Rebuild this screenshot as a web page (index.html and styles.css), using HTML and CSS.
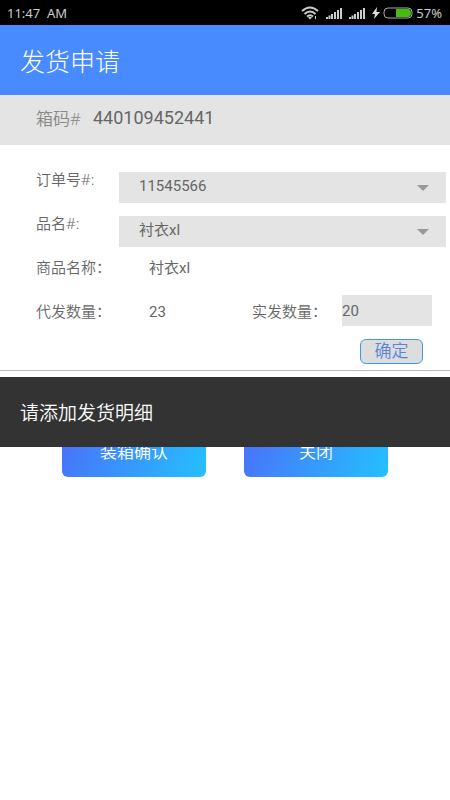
FILE: index.html
```html
<!DOCTYPE html>
<html lang="zh-CN">
<head>
	<meta charset="utf-8">
	<meta name="viewport" content="width=device-width, initial-scale=1">
	<title>发货申请</title>

	<link rel="stylesheet" href="styles.css">
</head>
<body>

	<div class="status-bar">
		<span class="status-time">11:47&nbsp; AM</span>
		<div class="status-icons">
			<svg class="wifi" width="18" height="14" viewBox="0 0 18 14" fill="none" stroke="#ccc" stroke-width="2">
				<path d="M1 5Q9 -2 17 5M3.500 8Q9 3 14.500 8M6 10.500Q9 8 12 10.500"/>
				<path d="M7 11.500Q9 10 11 11.500L9 13.500Z" fill="#ccc" stroke="none"/>
				<path d="M14.500 10V13" stroke-width="1"/>
			</svg>
			<svg class="signal" width="16" height="12" viewBox="0 0 16 12" fill="#ccc">
				<path d="M0 10h2v2H0zM2.500 8.500h2v3.500h-2zM5 7h2v5H5zM8 5h2v7H8zM11 3h2v9h-2zM14 1h2v11h-2z"/>
			</svg>
			<svg class="signal" width="16" height="12" viewBox="0 0 16 12" fill="#ccc">
				<path d="M0 10h2v2H0zM2.500 8.500h2v3.500h-2zM5 7h2v5H5zM8 5h2v7H8zM11 3h2v9h-2zM14 1h2v11h-2z"/>
			</svg>
			<svg class="bolt" width="8" height="12" viewBox="0 0 8 12" fill="#ddd">
				<path d="M5 0L0 7H3L2 12L8 5H4.500Z"/>
			</svg>
			<svg class="battery" width="30" height="12" viewBox="0 0 30 12">
				<rect x="1" y="1" width="28" height="10" rx="4" fill="none" stroke="#aaa"/>
				<path d="M13 2H25Q28 2 28 6T25 10H13Z" fill="#4b1"/>
			</svg>
			<span>57%</span>
		</div>
	</div>

	<header class="title-bar">
		<h1>发货申请</h1>
	</header>

	<div class="box-code">
		<span class="box-code-label">箱码#</span>
		<span class="box-code-value">440109452441</span>
	</div>

	<main>
		<form class="detail-form">
			<div class="row">
				<label for="order">订单号#:</label>
				<div class="select-box">
					<select id="order">
						<option>11545566</option>
					</select>
				</div>
			</div>

			<div class="row">
				<label for="product">品名#:</label>
				<div class="select-box">
					<select id="product">
						<option>衬衣xl</option>
					</select>
				</div>
			</div>

			<div class="row">
				<span class="row-label">商品名称：</span>
				<span class="row-value">衬衣xl</span>
			</div>

			<div class="row">
				<span class="row-label">代发数量：</span>
				<span class="row-value">23</span>
				<label class="quantity-label" for="quantity">实发数量：</label>
				<input class="quantity" type="text" id="quantity" value="20">
			</div>

			<div class="confirm">
				<button type="button" class="confirm-button">确定</button>
			</div>
		</form>

		<div class="footer">
			<div class="actions">
				<button type="button" class="action-button">装箱确认</button>
				<button type="button" class="action-button">关闭</button>
			</div>

			<!-- Message shown over the buttons -->
			<div class="toast" role="alert">请添加发货明细</div>
		</div>
	</main>

</body>
</html>
```

FILE: styles.css
```css
* {
	box-sizing: border-box;
}

body {
	margin: 0;
	background: #fff;
	color: #666;
	font-family: Roboto, "Noto Sans CJK SC", sans-serif;
	font-size: 15px;
}

input,
select,
button {
	margin: 0;
	border: 0;
	border-radius: 0;
	font: inherit;
	color: inherit;
}

.status-bar {
	display: flex;
	justify-content: space-between;
	align-items: center;
	height: 25px;
	padding: 0 8px 0 7px;
	background: #000;
	color: #ccc;
	font-family: "Noto Sans", sans-serif;
	font-size: 13px;
}

.status-icons {
	display: flex;
	align-items: center;
	gap: 7px;
}

.bolt {
	margin-right: -4px;
}

.battery {
	margin-right: -4px;
}

.title-bar {
	display: flex;
	align-items: center;
	height: 70px;
	padding: 0 20px;
	background: #488aff;
	color: #fff;
}

.title-bar h1 {
	margin: 0;
	font-size: 25px;
	font-weight: 300;
}

.box-code {
	display: flex;
	gap: 12px;
	height: 50px;
	padding: 0 36px;
	background: #e4e4e4;
	line-height: 48px;
}

.box-code-label {
	color: #888;
	font-family: "Noto Sans", "Noto Sans CJK SC", sans-serif;
	font-size: 17px;
	font-weight: 350;
}

.box-code-value {
	font-size: 18px;
	line-height: 46px;
}

.detail-form {
	padding: 14px 0 6px 36px;
	border-bottom: 1px solid #bbb;
}

.row {
	display: flex;
	height: 44px;
	line-height: 42px;
}

.row label,
.row-label {
	flex: none;
	width: 83px;
	font-family: "Noto Sans", "Noto Sans CJK SC", sans-serif;
	font-weight: 350;
	line-height: 40px;
}

.select-box {
	position: relative;
	flex: 1;
	align-self: flex-end;
	height: 31px;
	margin-right: 4px;
	background: #e4e4e4;
}

.select-box::after {
	content: "";
	position: absolute;
	top: 13px;
	right: 17px;
	border: 6px solid transparent;
	border-top-color: #999;
	border-bottom: 0;
	pointer-events: none;
}

.select-box select {
	display: block;
	width: 100%;
	height: 29px;
	padding: 0 40px 0 20px;
	appearance: none;
	background: none;
	line-height: 29px;
}

.row-value {
	flex: 1;
	padding-left: 30px;
}

.row .quantity-label {
	width: 90px;
}

.quantity {
	flex: none;
	width: 90px;
	height: 31px;
	margin: 4px 18px 0 0;
	padding: 0;
	background: #e4e4e4;
}

.confirm {
	display: flex;
	justify-content: flex-end;
	padding: 4px 27px 0 0;
}

.confirm-button {
	width: 63px;
	height: 25px;
	padding: 0;
	border: 1px solid #3b9be0;
	border-radius: 6px;
	background: #ddd;
	color: #5b84d8;
	font-size: 17px;
	font-weight: 350;
	line-height: 21px;
}

.footer {
	position: relative;
}

.actions {
	display: grid;
	grid-template-columns: 1fr 1fr;
	gap: 38px;
	padding: 55px 62px 0;
}

.action-button {
	height: 51px;
	padding: 0 0 3px;
	border-radius: 6px;
	background: linear-gradient(110deg, #4a70f8, #24c0ff);
	color: #fff;
	font-size: 17px;
	font-weight: 350;
}

.toast {
	position: absolute;
	top: 6px;
	left: 0;
	right: 0;
	height: 70px;
	padding: 0 20px;
	background: #333;
	color: #fff;
	font-size: 19px;
	font-weight: 350;
	line-height: 74px;
}
```
